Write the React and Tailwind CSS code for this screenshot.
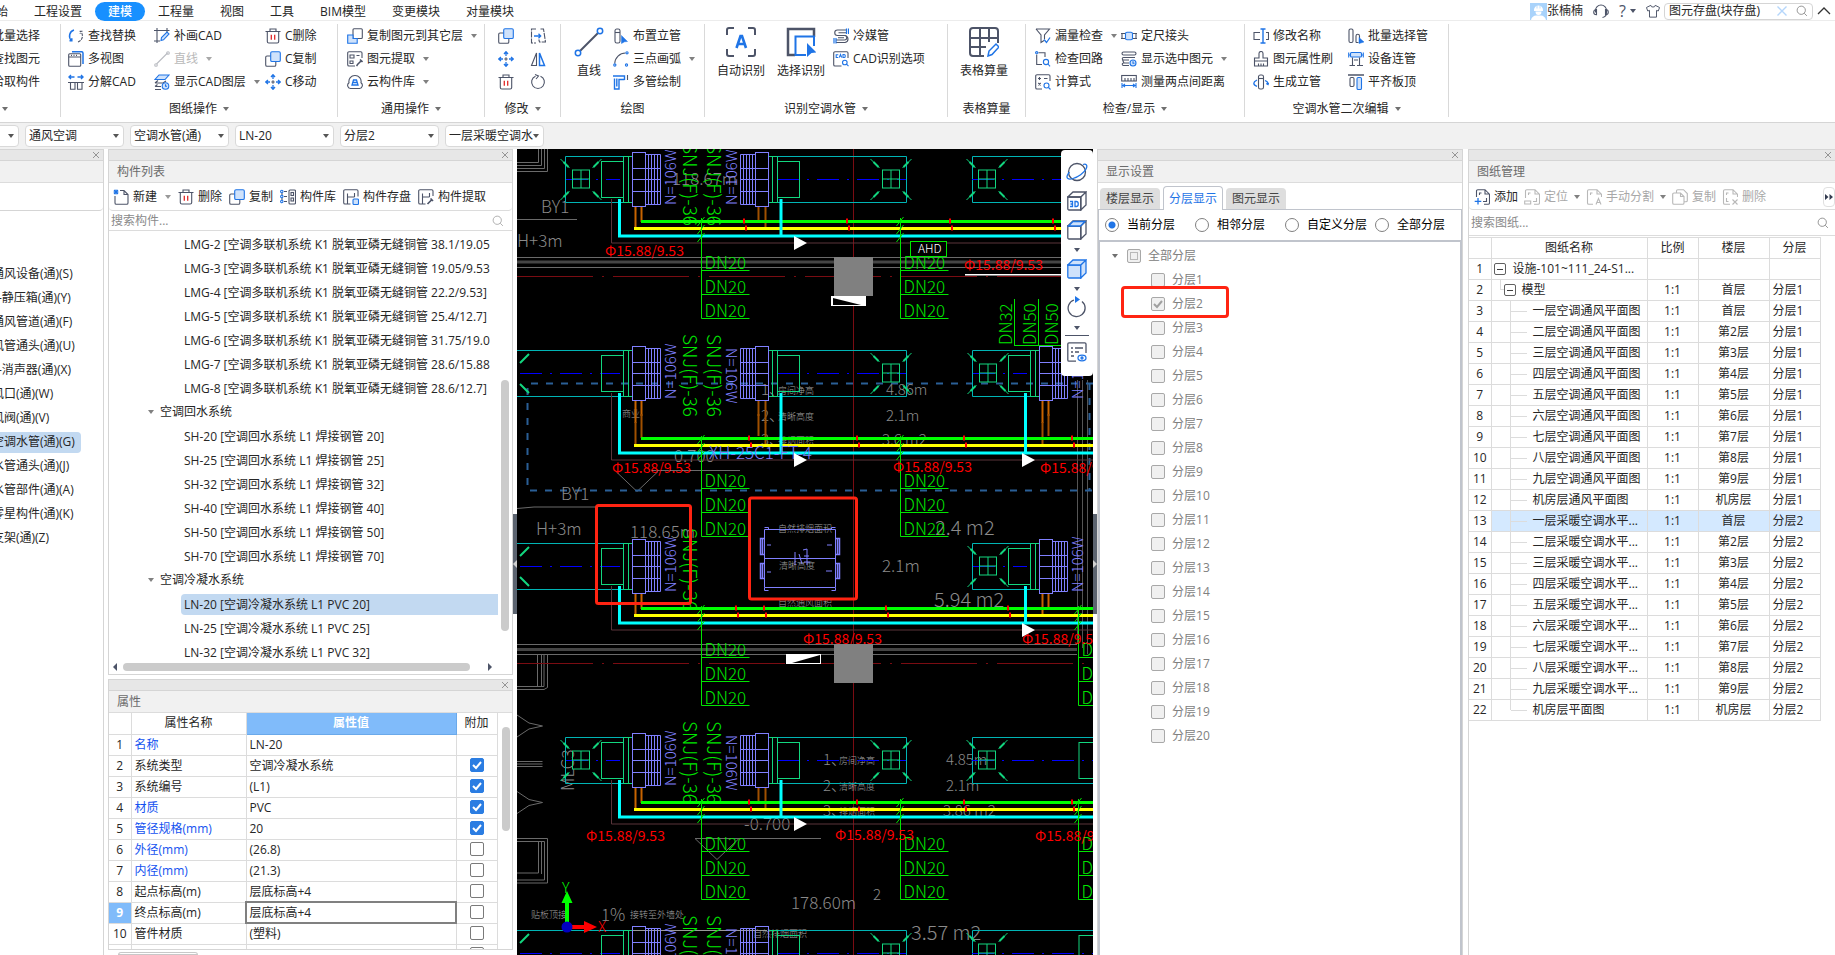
import { useState } from "react";

const BLUE = "#1f74e6";
const PALE = "#cfe2fb";

// All small icons share a 16x16 grid, dark strokes come from currentColor
const ICONS = {
  swap: (
    <>
      <path d="M6 2a6.3 6.3 0 0 0-2.6 10.5M1.5 12.8h2.3v-2.5" stroke={BLUE} strokeWidth="1.5" />
      <path d="M10 14a6.3 6.3 0 0 0 2.6-10.5M14.5 3.2h-2.3v2.5" strokeDasharray="3 1" />
    </>
  ),
  windows: (
    <>
      <path d="M4 .7h9.5a1.5 1.5 0 0 1 1.5 1.5V13" stroke={BLUE} strokeWidth="1.5" />
      <rect x=".7" y="2.7" width="12" height="12.5" rx="1" />
      <path d="M.7 6h12M3 4.4h1M5.5 4.4h1M8 4.4h1" />
    </>
  ),
  explode: (
    <>
      <path d="M1 3h5.5M3 1 1 3l2 2M9.500 3H15M13 1l2 2-2 2" stroke={BLUE} strokeWidth="1.4" />
      <path d="M0 8.500h16M2.500 8.500v6.800h4.500V8.500M9.500 8.500v6.800h4.500V8.500" />
    </>
  ),
  patch: (
    <>
      <path d="M0 2.500h15.500M3 0v15M0 13h6M13 0v4" />
      <path d="m7 12.500.5-3L13 4l2 2-5.500 5.800-2.500.7Z" stroke={BLUE} fill={PALE} />
    </>
  ),
  lineOff: (
    <g stroke="#b9bcc2">
      <path d="m2.5 13 11-11" />
      <circle cx="2" cy="14" r="1.3" />
      <circle cx="14" cy="2" r="1.3" />
    </g>
  ),
  layers: (
    <>
      <path d="m5 1h10l-4 4.500H1Z" fill={PALE} stroke={BLUE} />
      <path d="M1 9h8l3-2M4 6.500 1 9M1 12.500h6M3.500 10.500l-2.500 2M1 15.500h6" />
      <circle cx="11.5" cy="12" r="3.3" stroke={BLUE} fill={PALE} />
      <path d="M11.5 10.2v2h1.500" stroke={BLUE} />
    </>
  ),
  trash: (
    <>
      <path d="M.5 3.500h15M5 3V1h6v2M2.300 4v9.500A1.500 1.500 0 0 0 3.800 15h8.400a1.500 1.500 0 0 0 1.500-1.500V4" />
      <path d="M6.300 6.800v5M9.700 6.800v5" stroke="#e02828" strokeWidth="1.3" />
    </>
  ),
  copy: (
    <>
      <path d="M6 5H2a1.300 1.300 0 0 0-1.300 1.300V14A1.300 1.300 0 0 0 2 15.300h7.500a1.300 1.300 0 0 0 1.300-1.300v-3.500" />
      <rect x="5.7" y=".7" width="9.6" height="9.8" rx="1.3" fill={PALE} stroke={BLUE} />
    </>
  ),
  copyFloor: (
    <>
      <rect x="6" y=".7" width="9.3" height="9.8" rx="1" />
      <path d="M6 7H.7v8.300h9.500v-4.800H6Z" fill={PALE} stroke={BLUE} />
    </>
  ),
  move: (
    <>
      <path d="M8 5v-4M6 3l2-2.300L10 3M8 11v4M6 13l2 2.300 2-2.300M5 8H1M3 6 .7 8 3 10M11 8h4M13 6l2.300 2-2.300 2" stroke={BLUE} strokeWidth="1.3" />
      <path d="M8 6.300v3.400M6.300 8h3.400" />
    </>
  ),
  extract: (
    <>
      <path d="M15 7V2a1.300 1.300 0 0 0-1.300-1.300H2A1.300 1.300 0 0 0 .7 2v11.700A1.300 1.300 0 0 0 2 15h6" />
      <path d="M3 4h4v3H3ZM9.500 4.500h3M3 10h3v2.500H3Z" />
      <path d="m10 14 4-4M9.500 15l1-1M13 8.500l2.500 2.500" strokeWidth="1.6" />
    </>
  ),
  cloud: (
    <>
      <path d="M3.500 14.500A3.200 3.200 0 0 1 2 8.700 6 6 0 0 1 8 1.500a6 6 0 0 1 6 7.200 3.200 3.200 0 0 1-1.500 5.800Z" />
      <path d="M6.500 6h3l1.500 5h-6ZM5.500 8.500h5" stroke={BLUE} strokeWidth="1.3" />
    </>
  ),
  align: (
    <>
      <path d="M6 1H1.500v14H6M10.500 1h3l2 13h-6l-.7-2.500" strokeDasharray="6 1" />
      <path d="M4 8h6.500M8.500 5.800 10.700 8l-2.200 2.200" stroke={BLUE} strokeWidth="1.3" />
    </>
  ),
  mirror: (
    <>
      <path d="M6.500 2v12.500H1.500Z" />
      <path d="M9.500 2v12.500h5Z" stroke={BLUE} strokeWidth="1.5" />
    </>
  ),
  rotate: (
    <>
      <path d="M10.500 2.200A6.400 6.400 0 1 1 5.500 2.200" />
      <path d="M5 .5 8.500 2 6 5" />
    </>
  ),
  riser: (
    <>
      <rect x="2" y="1" width="5" height="14" rx="1.8" />
      <path d="M2 4.500h5" />
      <path d="m8.500 7.500 6 6-3 .3-3 1.700Z" fill={BLUE} stroke={BLUE} strokeWidth=".5" />
    </>
  ),
  arc: (
    <>
      <path d="M1.700 12.500A11 11 0 0 1 12.500 2" />
      <g stroke={BLUE}>
        <circle cx="1.8" cy="14" r="1.1" />
        <circle cx="14" cy="1.8" r="1.1" />
        <circle cx="13.5" cy="14" r="1.1" />
      </g>
    </>
  ),
  multipipe: (
    <>
      <path d="M0 2h11.500v4M1.500 4.500V15H6V5.500h5.500M3.800 12.500V4.500" stroke={BLUE} strokeWidth="1.4" />
      <path d="M14.500 1v5" />
    </>
  ),
  coil: (
    <>
      <path d="M13 2H4.500a2.700 2.700 0 0 0 0 5.500h7a2.200 2.200 0 0 1 0 4.500H3M13 4.800H5.500M5 9.800h6M3 14.500h9a3.500 3.500 0 0 0 3-3.500c0-2-1.500-3.500-3-3.500" />
      <path d="M13.500.5V6M15.500.5V6M1 10v5.500M3 10v5.500" stroke={BLUE} strokeWidth="1.2" />
    </>
  ),
  cadOption: (
    <>
      <path d="M15 7V2a1.300 1.300 0 0 0-1.300-1.300H2A1.300 1.300 0 0 0 .7 2v11.700A1.300 1.300 0 0 0 2 15h6.500" />
      <path d="M5.300 3.700H3.200v2.800h2.100M6.300 6.500l1.200-3 1.200 3M10 3.500v3h1.200a1 1 0 0 0 1-1V4.500a1 1 0 0 0-1-1Z" stroke={BLUE} />
      <circle cx="11.8" cy="11.5" r="2.3" stroke={BLUE} />
      <path d="m13.500 13.200 2 2" stroke={BLUE} />
    </>
  ),
  leak: (
    <>
      <path d="M1 1h13.500L9.500 7v4M1 1l5 6v7.500l3-2" />
      <path d="m9 11.500 2.500 3L15 9.500" stroke={BLUE} strokeWidth="1.3" />
    </>
  ),
  loop: (
    <>
      <path d="M3.500 1.700H10V6M1.700 3.500V13.500H7" />
      <g stroke={BLUE}>
        <circle cx="1.7" cy="1.7" r="1.1" />
        <circle cx="11" cy="11" r="2.6" />
        <path d="m13 13 2 2.300" />
      </g>
    </>
  ),
  formula: (
    <>
      <path d="M15 7V2a1.300 1.300 0 0 0-1.300-1.300H2A1.300 1.300 0 0 0 .7 2v11.700A1.300 1.300 0 0 0 2 15h5" />
      <path d="M3 4.500h3M4.500 3v3M9 4.500h3.500M3.300 9l2.400 2.400M5.700 9l-2.400 2.400" />
      <circle cx="11.5" cy="11.5" r="2.5" stroke={BLUE} />
      <path d="m13.500 13.500 2 2" stroke={BLUE} />
    </>
  ),
  joint: (
    <>
      <path d="M0 5.500h4.500M0 10.500h4.500M11.500 5.500H16M11.500 10.500H16M1 5.500v5M15 5.500v5" />
      <rect x="4.5" y="4.3" width="7" height="7.4" rx="1.5" fill={PALE} stroke={BLUE} />
    </>
  ),
  showSel: (
    <>
      <rect x="1" y="1" width="14" height="3" rx="1.5" />
      <path d="M14 6.500H2.500a1.200 1.200 0 0 0 0 2.500H8M8 12H2.500a1.200 1.200 0 0 0 0 2.500H8M1.500 9l1.500 3" />
      <circle cx="12" cy="12" r="3" stroke={BLUE} fill={PALE} />
      <path d="M12 10.300v2h1.500" stroke={BLUE} />
    </>
  ),
  measure: (
    <>
      <rect x=".7" y="1.5" width="14.6" height="5.5" />
      <path d="M4 4v3M7 4v3M10 4v3M13 4v3" />
      <path d="M1 9v5M15 9v5M2 11.500h12M4 10l-2 1.500L4 13M12 10l2 1.500-2 1.500" stroke={BLUE} />
    </>
  ),
  rename: (
    <>
      <path d="M7 4.500H1v7h6M13 4.500h2.500v7H13" />
      <path d="M10 1v14M7.500 1h5M7.500 15h5" stroke={BLUE} strokeWidth="1.4" />
    </>
  ),
  brush: <path d="M6 7V2.500a2 2 0 0 1 4 0V7h4.500v3h-13V7ZM1.500 10v5h13v-5M5.500 15v-2.500M8 15v-2.500M10.500 15v-2.500" />,
  genRiser: (
    <>
      <rect x="5.5" y="1" width="5" height="14" rx="1.8" />
      <path d="M5.500 4.500h5" />
      <path d="M4 6C2 7 .8 8 .8 9.300c0 1.400 1 2.300 3.200 3M12 6.500c1.800.6 3 1.500 3 3.500M15.700 8.800 15 10.500l-1.800-1" stroke={BLUE} strokeWidth="1.3" />
    </>
  ),
  batchPipe: (
    <>
      <rect x="1" y="1" width="4" height="13.5" rx="1.5" />
      <path d="M8 14.500V8a1.500 1.500 0 0 1 3.500 0v2M8 14.500h2.500" />
      <path d="m11 9.500 5 4.500-5 1.500Z" fill={BLUE} stroke={BLUE} strokeWidth=".5" />
    </>
  ),
  device: (
    <>
      <rect x="2.5" y="1.5" width="11" height="4.5" rx="1" stroke={BLUE} fill={PALE} />
      <path d="M.7 1.500v5M15.300 1.500v5M.7 4h2M13 4h2" stroke={BLUE} />
      <path d="M4.500 6.500v8M11.500 6.500v8M1.500 14.500h5.500M9 14.500h6M6 9h4" />
    </>
  ),
  alignTop: (
    <>
      <path d="M0 1h16" strokeWidth="1.5" />
      <rect x="2" y="3.5" width="4" height="9" rx="1.2" />
      <rect x="9" y="3.5" width="4.5" height="12" rx="1.2" fill={PALE} stroke={BLUE} />
    </>
  ),
  newItem: (
    <>
      <path d="M2 7v7a1.300 1.300 0 0 0 1.300 1.300h10.400A1.300 1.300 0 0 0 15 14V5.500L11 1.500H7M11 1.500v4h4" />
      <path d="M1 1l4 4M5 1 1 5M3 .5v5M.5 3h5" stroke={BLUE} />
    </>
  ),
  library: (
    <>
      <rect x="9" y="1" width="6.5" height="14" rx="1" />
      <rect x="11" y="3.5" width="2.5" height="3" />
      <rect x="11" y="9" width="2.5" height="3" />
      <path d="M4 2.500h3M4 7.500h3M4 12.500h3M2 3.700v2.600M2 8.700v2.600" />
      <g stroke={BLUE}>
        <circle cx="1.8" cy="2.5" r="1.2" />
        <circle cx="1.8" cy="7.5" r="1.2" />
        <circle cx="1.8" cy="12.5" r="1.2" />
      </g>
    </>
  ),
  save: (
    <>
      <path d="M15 7.500V2a1.300 1.300 0 0 0-1.300-1.300H2A1.300 1.300 0 0 0 .7 2v11.700A1.300 1.300 0 0 0 2 15h5.500M4.500 15V4.500M11.500 4v4M4.500 8h7" />
      <rect x="10" y="10" width="5.5" height="5.5" rx="1" fill={PALE} stroke={BLUE} />
    </>
  ),
  pull: (
    <>
      <path d="M15 7V2a1.300 1.300 0 0 0-1.300-1.300H2A1.300 1.300 0 0 0 .7 2v11.700A1.300 1.300 0 0 0 2 15h5.500M4.500 15V4.500M11.500 4v4M4.500 8h7" />
      <path d="m9.500 15 4-4M12.500 9.500l2.500 2.500" strokeWidth="1.7" />
    </>
  ),
  sheetAdd: (
    <>
      <path d="M2.500 8V2A1.300 1.300 0 0 1 3.800.7H11l4.500 4.500V14a1.300 1.300 0 0 1-1.300 1.300H10M11 1v4h4M5.500 6V4h2M12.500 9v3.500H9" />
      <path d="M4 9v6.500M.7 12.300h6.600" stroke={BLUE} strokeWidth="1.3" />
    </>
  ),
  sheetLocate: (
    <>
      <path d="M1.500 9V2A1.300 1.300 0 0 1 2.800.7H11l4.500 4.500V14a1.300 1.300 0 0 1-1.300 1.300H10M11 1v4h4M4.500 6V4h2M12.500 9v3.500H9" />
      <path d="M.7 12h6v3h-6Z" />
    </>
  ),
  sheetSplit: (
    <>
      <path d="M15.500 8V5.200L11 .7H2.800A1.300 1.300 0 0 0 1.500 2v12a1.300 1.300 0 0 0 1.300 1.300H7M11 1v4h4M4.500 6V4h2" />
      <path d="m10 15.500 2.500-6 2.500 6M11 13.500h3" />
    </>
  ),
  sheetCopy: (
    <>
      <path d="M4.500 4V2A1.300 1.300 0 0 1 5.800.7h5.700L15.300 4.500v7a1.300 1.300 0 0 1-1.300 1.300h-2" />
      <path d="M.7 5.300A1.300 1.300 0 0 1 2 4h6.500L12 7.500V14a1.300 1.300 0 0 1-1.300 1.300H2A1.300 1.300 0 0 1 .7 14ZM8.500 4v3.500H12" />
    </>
  ),
  sheetDelete: (
    <>
      <path d="M15.500 8V5.200L11 .7H2.800A1.300 1.300 0 0 0 1.500 2v12a1.300 1.300 0 0 0 1.300 1.300H8M11 1v4h4M4.500 6V4h2M4.500 9v3.500h2" />
      <path d="m10.500 10.500 5 5M15.500 10.500l-5 5" />
    </>
  ),
  search: (
    <>
      <circle cx="7" cy="7" r="5.5" />
      <path d="m11 11 3.500 3.500" />
    </>
  ),
  close: <path d="m2 2 12 12M14 2 2 14" strokeWidth="1.8" />,
  headset: (
    <>
      <path d="M2.500 9.500V7.500a5.500 5.500 0 0 1 11 0v2a5 5 0 0 1-4 5" />
      <path d="M3.500 6.500C1.500 6.500.7 8 .7 9.200s.8 2.500 2.800 2.500ZM12.500 6.500c2 0 2.800 1.500 2.800 2.700s-.8 2.500-2.800 2.500Z" />
    </>
  ),
  shirt: <path d="M5.500 1.500a2.500 2 0 0 0 5 0L15.500 4 14 8l-2-.7V15H4V7.300L2 8 .5 4Z" />,
};

function Icon({ name, className = "size-4" }) {
  return (
    <svg viewBox="0 0 16 16" fill="none" stroke="currentColor" strokeWidth="1.1" className={`shrink-0 ${className}`} aria-hidden="true">
      {ICONS[name]}
    </svg>
  );
}

function Caret({ className = "text-[#707070]" }) {
  return (
    <svg viewBox="0 0 6 4" className={`h-1 w-1.5 shrink-0 ${className}`} aria-hidden="true">
      <path d="M0 0h6L3 4Z" fill="currentColor" />
    </svg>
  );
}

/* ---------- Menu bar ---------- */

const MENUS = ["开始", "工程设置", "建模", "工程量", "视图", "工具", "BIM模型", "变更模块", "对量模块"];

function MenuBar() {
  const [query, setQuery] = useState("图元存盘(块存盘)");
  return (
    <header className="flex h-[21px] shrink-0 justify-between border-b border-[#ececec] bg-white pt-0.5">
      <nav className="-ml-[29px] flex">
        {MENUS.map((m) => (
          <button
            key={m}
            className={
              m === "建模"
                ? "h-[19px] rounded-full bg-[#1890ff] px-[13px] font-medium text-white"
                : "h-[19px] px-[13px]"
            }
          >
            {m}
          </button>
        ))}
      </nav>
      <div className="flex items-center gap-1 pr-1">
        <button className="mr-1.5 flex items-center">
          <svg viewBox="0 0 17 17" className="size-[17px]" aria-hidden="true">
            <rect width="17" height="17" fill="#a9d3fb" />
            <path d="M4 7a4.500 4.500 0 0 1 9 0v1H4ZM5.500 8.500h6a3 3.500 0 0 1-6 0ZM1 17c.5-3 3-4.500 5-4.500h5c2 0 4.500 1.500 5 4.500Z" fill="#fff" />
            <path d="M7 2.500v3M10 2.500v3" stroke="#a9d3fb" strokeWidth=".8" />
          </svg>
          张楠楠
        </button>
        <button aria-label="客服" className="mr-1.5 text-[#4d5468]"><Icon name="headset" /></button>
        <button aria-label="帮助" className="mr-1.5 flex items-center gap-1 text-base leading-4 text-[#4d5468]">
          ?<Caret className="text-[#4d5468]" />
        </button>
        <button aria-label="皮肤" className="text-[#4d5468]"><Icon name="shirt" className="size-3.5" /></button>
        <div className="flex h-[17px] w-[149px] items-center gap-2 rounded-sm border border-[#d5d5d5] px-1">
          <input
            aria-label="搜索功能"
            value={query}
            onChange={(e) => setQuery(e.target.value)}
            className="min-w-0 flex-1 leading-4 outline-none"
          />
          <button aria-label="清空" className="text-[#b5d6fb]"><Icon name="close" className="size-3" /></button>
          <button aria-label="搜索" className="text-[#808080]"><Icon name="search" className="size-3" /></button>
        </div>
        <button aria-label="收起" className="text-[#333]">
          <svg viewBox="0 0 14 8" className="h-2 w-3.5" fill="none" stroke="currentColor" strokeWidth="1.3">
            <path d="m1 7 6-6 6 6" />
          </svg>
        </button>
      </div>
    </header>
  );
}

/* ---------- Ribbon ---------- */

function Tool({ icon, label, caret, off }) {
  return (
    <button className={`flex h-[23px] items-center gap-1 whitespace-nowrap ${off ? "text-[#b9b9b9]" : ""}`}>
      <span className="text-[#4d5468]"><Icon name={icon} /></span>
      {label}
      {caret && <span className="pl-1"><Caret className={off ? "text-[#a8a8a8]" : "text-[#808080]"} /></span>}
    </button>
  );
}

function BigTool({ label, children }) {
  return (
    <button className="flex w-12 flex-col items-center gap-1.5 pt-[3px] whitespace-nowrap">
      <svg viewBox="0 0 30 30" className="size-[30px] text-[#4d5468]" fill="none" stroke="currentColor" strokeWidth="2" aria-hidden="true">
        {children}
      </svg>
      {label}
    </button>
  );
}

function Group({ label, caret, width, children }) {
  return (
    <section className={`flex h-[93px] flex-col justify-between border-r border-[#d9d9d9] ${width}`}>
      <div className="flex">{children}</div>
      <div className="flex h-4 items-center justify-center gap-1.5">
        {label}
        {caret && <Caret className="text-[#707070]" />}
      </div>
    </section>
  );
}

function Ribbon() {
  return (
    <div className="flex h-[101px] shrink-0 overflow-hidden bg-white pt-[3px]">
      <section className="flex h-[93px] w-[61px] shrink-0 flex-col justify-between border-r border-[#d9d9d9]">
        <div className="-ml-2 flex flex-col items-start">
          <button className="h-[23px] whitespace-nowrap">批量选择</button>
          <button className="h-[23px] whitespace-nowrap">查找图元</button>
          <button className="h-[23px] whitespace-nowrap">拾取构件</button>
        </div>
        <div className="flex h-4 items-center pl-0.5"><Caret /></div>
      </section>
      <Group label="图纸操作" caret width="w-[277px] shrink-0">
        <div className="w-[86px] pl-[7px]">
          <Tool icon="swap" label="查找替换" />
          <Tool icon="windows" label="多视图" />
          <Tool icon="explode" label="分解CAD" />
        </div>
        <div className="w-[113px] pl-[7px]">
          <Tool icon="patch" label="补画CAD" />
          <Tool icon="lineOff" label="直线" caret off />
          <Tool icon="layers" label="显示CAD图层" caret />
        </div>
        <div className="pl-[5px]">
          <Tool icon="trash" label="C删除" />
          <Tool icon="copy" label="C复制" />
          <Tool icon="move" label="C移动" />
        </div>
      </Group>
      <Group label="通用操作" caret width="w-[147px] shrink-0">
        <div className="pl-[9px]">
          <Tool icon="copyFloor" label="复制图元到其它层" caret />
          <Tool icon="extract" label="图元提取" caret />
          <Tool icon="cloud" label="云构件库" caret />
        </div>
      </Group>
      <Group label="修改" caret width="w-[76px] shrink-0">
        <div className="grid grid-cols-2 gap-x-4 pl-[13px] text-[#4d5468]">
          {["copy", "align", "move", "mirror", "trash", "rotate"].map((n) => (
            <button key={n} aria-label={n} className="flex h-[23px] items-center"><Icon name={n} /></button>
          ))}
        </div>
      </Group>
      <Group label="绘图" width="w-[144px] shrink-0">
        <div className="pl-1">
          <BigTool label="直线">
            <path d="M5 25 25 5" />
            <g stroke={BLUE} fill="#fff" strokeWidth="1.5">
              <circle cx="4" cy="26" r="2.7" />
              <circle cx="26" cy="4" r="2.7" />
            </g>
          </BigTool>
        </div>
        <div>
          <Tool icon="riser" label="布置立管" />
          <Tool icon="arc" label="三点画弧" caret />
          <Tool icon="multipipe" label="多管绘制" />
        </div>
      </Group>
      <Group label="识别空调水管" caret width="w-[243px] shrink-0">
        <div className="flex gap-3 pr-2 pl-3">
          <BigTool label="自动识别">
            <path d="M1 8V3a2 2 0 0 1 2-2h5M22 1h5a2 2 0 0 1 2 2v5M29 22v5a2 2 0 0 1-2 2h-5M8 29H3a2 2 0 0 1-2-2v-5" />
            <path d="m10.500 21 4-12h1.500l4 12M12 17h6.500" stroke={BLUE} strokeWidth="2.6" />
          </BigTool>
          <BigTool label="选择识别">
            <path d="M9 28H2V2h26v8" strokeWidth="2.5" />
            <path d="M20 28H9.500V9.500H28V19" stroke={BLUE} />
            <path d="m21 16 9.500 9.500-5 .5-4.500 4Z" fill={BLUE} stroke="none" />
          </BigTool>
        </div>
        <div>
          <Tool icon="coil" label="冷媒管" />
          <Tool icon="cadOption" label="CAD识别选项" />
        </div>
      </Group>
      <Group label="表格算量" width="w-[78px] shrink-0">
        <div className="pl-3">
          <BigTool label="表格算量">
            <path d="M15 29H4a3 3 0 0 1-3-3V4a3 3 0 0 1 3-3h22a3 3 0 0 1 3 3v12M1 11h28M1 20h16M11 1v28M20 1v14" />
            <path d="m19 29 1-5 7-7 3 3-7 7.500Z" stroke={BLUE} strokeWidth="1.5" />
          </BigTool>
        </div>
      </Group>
      <Group label="检查/显示" caret width="w-[219px] shrink-0">
        <div className="w-[95px] pl-[9px]">
          <Tool icon="leak" label="漏量检查" caret />
          <Tool icon="loop" label="检查回路" />
          <Tool icon="formula" label="计算式" />
        </div>
        <div>
          <Tool icon="joint" label="定尺接头" />
          <Tool icon="showSel" label="显示选中图元" caret />
          <Tool icon="measure" label="测量两点间距离" />
        </div>
      </Group>
      <Group label="空调水管二次编辑" caret width="w-[204px] shrink-0">
        <div className="w-[103px] pl-2">
          <Tool icon="rename" label="修改名称" />
          <Tool icon="brush" label="图元属性刷" />
          <Tool icon="genRiser" label="生成立管" />
        </div>
        <div>
          <Tool icon="batchPipe" label="批量选择管" />
          <Tool icon="device" label="设备连管" />
          <Tool icon="alignTop" label="平齐板顶" />
        </div>
      </Group>
    </div>
  );
}

const COMBOS = [
  ["楼层", "首层"],
  ["专业", "通风空调"],
  ["构件类型", "空调水管(通)"],
  ["构件", "LN-20"],
  ["分层", "分层2"],
  ["图纸", "一层采暖空调水"],
];

function ComboBar() {
  return (
    <div className="h-[27px] shrink-0 overflow-hidden border-t border-[#d5d5d5] bg-[#f1f1f1]">
      <div className="-ml-20 flex gap-1.5 pt-0.5">
        {COMBOS.map(([name, value]) => (
          <div key={name} className="relative w-[99px]">
            <select
              aria-label={name}
              className="h-[22px] w-full appearance-none rounded border border-[#d9d9d9] bg-white pr-2 pl-[3px] leading-5"
            >
              <option>{value}</option>
            </select>
            <span className="pointer-events-none absolute inset-y-0 right-[5px] flex items-center">
              <Caret className="text-[#555]" />
            </span>
          </div>
        ))}
      </div>
    </div>
  );
}

/* ---------- Shared panel parts ---------- */

function PanelHead({ title }) {
  return (
    <>
      <div className="flex h-3 shrink-0 items-center justify-end border-t border-b border-[#d5d5d5] bg-[#e7e7e7] pr-[3px] text-[#8a8a8a]">
        <button aria-label="关闭面板"><Icon name="close" className="size-2" /></button>
      </div>
      <h2 className="h-[22px] shrink-0 border-b border-[#dcdcdc] bg-[#f1f1f1] pl-2 leading-[21px] text-[#6b6b6b]">{title}</h2>
    </>
  );
}

const NAV = [
  "通风设备(通)(S)",
  "-静压箱(通)(Y)",
  "通风管道(通)(F)",
  "风管通头(通)(U)",
  "-消声器(通)(X)",
  "风口(通)(W)",
  "风阀(通)(V)",
  "空调水管(通)(G)",
  "水管通头(通)(J)",
  "水管部件(通)(A)",
  "零星构件(通)(K)",
  "支架(通)(Z)",
];

function NavPanel() {
  return (
    <aside className="flex w-[104px] shrink-0 flex-col overflow-hidden border-r border-[#d5d5d5] bg-white">
      <PanelHead title="" />
      <div className="h-7 shrink-0 rounded-r border-b border-[#d5d5d5]" />
      <ul className="pt-[51px]">
        {NAV.map((n) => (
          <li key={n} className="flex h-6 items-center">
            <button
              className={`-ml-2 h-[21px] rounded pr-1.5 whitespace-nowrap ${n[0] === "-" ? "pl-1.5" : ""} ${
                n.endsWith("(G)") ? "bg-[#c2d9f1]" : ""
              }`}
            >
              {n}
            </button>
          </li>
        ))}
      </ul>
    </aside>
  );
}

/* ---------- Component list ---------- */

const COMPONENTS = [
  "LMG-2 [空调多联机系统 K1 脱氧亚磷无缝铜管 38.1/19.05",
  "LMG-3 [空调多联机系统 K1 脱氧亚磷无缝铜管 19.05/9.53",
  "LMG-4 [空调多联机系统 K1 脱氧亚磷无缝铜管 22.2/9.53]",
  "LMG-5 [空调多联机系统 K1 脱氧亚磷无缝铜管 25.4/12.7]",
  "LMG-6 [空调多联机系统 K1 脱氧亚磷无缝铜管 31.75/19.0",
  "LMG-7 [空调多联机系统 K1 脱氧亚磷无缝铜管 28.6/15.88",
  "LMG-8 [空调多联机系统 K1 脱氧亚磷无缝铜管 28.6/12.7]",
  "#空调回水系统",
  "SH-20 [空调回水系统 L1 焊接钢管 20]",
  "SH-25 [空调回水系统 L1 焊接钢管 25]",
  "SH-32 [空调回水系统 L1 焊接钢管 32]",
  "SH-40 [空调回水系统 L1 焊接钢管 40]",
  "SH-50 [空调回水系统 L1 焊接钢管 50]",
  "SH-70 [空调回水系统 L1 焊接钢管 70]",
  "#空调冷凝水系统",
  "LN-20 [空调冷凝水系统 L1 PVC 20]",
  "LN-25 [空调冷凝水系统 L1 PVC 25]",
  "LN-32 [空调冷凝水系统 L1 PVC 32]",
];

const LIST_TOOLS = [
  ["newItem", "新建", true],
  ["trash", "删除"],
  ["copy", "复制"],
  ["library", "构件库"],
  ["save", "构件存盘"],
  ["pull", "构件提取"],
];

function ComponentPanel() {
  return (
    <section className="flex h-[526px] shrink-0 flex-col border-x border-b border-[#d5d5d5] bg-white">
      <PanelHead title="构件列表" />
      <div className="flex h-7 shrink-0 items-center gap-[7px] rounded border-b border-[#dcdcdc] pt-px pl-1">
        {LIST_TOOLS.map(([icon, label, caret]) => (
          <button key={label} className="flex items-center gap-1 whitespace-nowrap">
            <span className="text-[#4d5468]"><Icon name={icon} /></span>
            {label}
            {caret && <span className="pl-1"><Caret className="text-[#999]" /></span>}
          </button>
        ))}
      </div>
      <div className="flex h-5 shrink-0 items-center border-b border-[#dcdcdc] pr-2">
        <input aria-label="搜索构件" placeholder="搜索构件..." className="min-w-0 flex-1 pl-0.5 outline-none placeholder:text-[#8a8a8a]" />
        <Icon name="search" className="size-3 text-[#a0a0a0]" />
      </div>
      <div className="flex min-h-0 flex-1 overflow-hidden">
        <ul className="min-w-0 flex-1 pt-px">
          {COMPONENTS.map((c) =>
            c[0] === "#" ? (
              <li key={c} className="flex h-6 items-center gap-1.5 pl-[39px]">
                <Caret className="text-[#808080]" />
                {c.slice(1)}
              </li>
            ) : (
              <li key={c} className="flex h-6 items-center pl-[72px]">
                <span
                  className={`h-[21px] min-w-0 flex-1 overflow-hidden rounded-l pl-[3px] leading-[21px] whitespace-nowrap ${
                    c.startsWith("LN-20") ? "bg-[#c2d9f1]" : ""
                  }`}
                >
                  {c}
                </span>
              </li>
            )
          )}
        </ul>
        <div className="w-3.5 shrink-0 px-[3px] pt-[149px]">
          <div className="h-[251px] w-2 rounded-full bg-[#cbcbcb]" />
        </div>
      </div>
      <div className="flex h-[15px] shrink-0 items-center gap-1.5 pr-5 pl-1 text-[#4d5468]">
        <svg viewBox="0 0 4 8" className="h-2 w-1" aria-hidden="true"><path d="M4 0v8L0 4Z" fill="currentColor" /></svg>
        <div className="mr-3 h-2 flex-1 rounded-full bg-[#cbcbcb]" />
        <svg viewBox="0 0 4 8" className="h-2 w-1" aria-hidden="true"><path d="M0 0v8l4-4Z" fill="currentColor" /></svg>
      </div>
    </section>
  );
}

/* ---------- Properties ---------- */

// name, value, highlighted name, attached (null = no tick box)
const PROPS = [
  ["名称", "LN-20", true, null],
  ["系统类型", "空调冷凝水系统", false, true],
  ["系统编号", "(L1)", false, true],
  ["材质", "PVC", true, true],
  ["管径规格(mm)", "20", true, true],
  ["外径(mm)", "(26.8)", true, false],
  ["内径(mm)", "(21.3)", true, false],
  ["起点标高(m)", "层底标高+4", false, false],
  ["终点标高(m)", "层底标高+4", false, false],
  ["管件材质", "(塑料)", false, false],
  ["", "", false, false],
];

function Tick({ label, checked }) {
  return (
    <span className="relative inline-flex">
      <input
        type="checkbox"
        aria-label={label}
        defaultChecked={checked}
        className="peer size-3.5 appearance-none rounded-xs border border-[#7a7a7a] bg-white checked:border-[#2b7de2] checked:bg-[#2b7de2]"
      />
      <svg viewBox="0 0 14 14" className="pointer-events-none absolute inset-0 hidden size-3.5 peer-checked:block" fill="none" stroke="#fff" strokeWidth="2">
        <path d="m3 7 3 3 5-6" />
      </svg>
    </span>
  );
}

function PropertyPanel() {
  return (
    <section className="mt-1 flex min-h-0 flex-1 flex-col">
      <div className="flex h-[271px] shrink-0 flex-col border-x border-b border-[#d5d5d5] bg-white">
        <PanelHead title="属性" />
        <div className="flex min-h-0 flex-1 overflow-hidden">
          <table className="w-[388px] table-fixed border-collapse self-start">
            <colgroup>
              <col className="w-[22px]" />
              <col className="w-[115px]" />
              <col className="w-[210px]" />
              <col className="w-[41px]" />
            </colgroup>
            <thead>
              <tr className="h-[21px]">
                <th className="border-r border-b border-[#dcdcdc]" />
                <th className="border-r border-b border-[#dcdcdc] font-normal">属性名称</th>
                <th className="border-r border-b border-[#6aa9ea] bg-[#80bbfa] font-bold text-white">属性值</th>
                <th className="border-r border-b border-[#dcdcdc] font-normal">附加</th>
              </tr>
            </thead>
            <tbody>
              {PROPS.map(([name, value, hot, on], i) => (
                <tr key={i} className="h-[21px]">
                  <td className={`border-r border-b border-[#dcdcdc] text-center ${i === 8 ? "bg-[#80bbfa] font-bold text-white" : ""}`}>
                    {i < 10 ? i + 1 : ""}
                  </td>
                  <td className={`border-r border-b border-[#dcdcdc] pl-[3px] ${hot ? "text-[#1452f0]" : ""}`}>{name}</td>
                  <td
                    className={`border-r border-b border-[#dcdcdc] pl-[3px] ${
                      i === 8 ? "outline-2 -outline-offset-1 outline-[#808080]" : ""
                    }`}
                  >
                    {value}
                  </td>
                  <td className="border-r border-b border-[#dcdcdc] text-center leading-none">
                    {on !== null && <Tick label={`附加 ${name}`} checked={on} />}
                  </td>
                </tr>
              ))}
            </tbody>
          </table>
          <div className="w-[15px] shrink-0 px-1 pt-3.5">
            <div className="h-[104px] w-2 rounded-full bg-[#cbcbcb]" />
          </div>
        </div>
      </div>
      <div className="mt-0.5 ml-2.5 h-3 w-20 rounded-t border border-[#c8c8c8] bg-white" />
    </section>
  );
}

/* ---------- Drawing canvas ---------- */

const GREEN = "#00e600";
const TEAL = "#12d67f";
const PURPLE = "#8080ff";
const GREY = "#8a8a8a";

function Diffuser({ x }) {
  return (
    <g stroke={TEAL}>
      <rect x={x} y="170" width="17" height="18" />
      <path d={`M${x + 8.5} 170v18M${x} 179h17`} />
      <path d={`M${x - 12} 159l9 9M${x + 29} 159l-9 9M${x - 12} 200l9-9M${x + 29} 200l-9-9`} />
      <path d={`M${x - 9} 162l5 5M${x + 26} 162l-5 5M${x - 9} 197l5-5M${x + 26} 197l-5-5`} strokeWidth="2" />
    </g>
  );
}

// Fan coil looking right, its duct starts at x = 565
function FanLeft({ open }) {
  return (
    <g>
      <path d={open ? "M480 156.500h144M480 202.500h144" : "M624 156.500h-58.500v46H624"} stroke="#00b4b4" />
      <path d={open ? "M480 179.500h140" : "M566 179.500h54"} stroke="#0000ff" strokeDasharray="22 8 2 8" />
      {!open && <Diffuser x={572.5} />}
      <rect x="601.5" y="161.5" width="22" height="36" stroke={TEAL} />
      <path d="M623.500 156.500h9v46h-9ZM628.500 156.500v46" stroke={TEAL} />
      <rect x="632.5" y="152.5" width="13" height="54" stroke={PURPLE} />
      <path d="M645.500 154.500h15v50h-15M648.500 154v50M651.500 154v50M654.500 154v50M657.500 154v50M633 168.500h27M633 179.500h27M633 191.500h27" stroke={PURPLE} />
      <text transform="translate(676 205) rotate(-90)" fill={PURPLE} fontSize="15">N=106W</text>
      <path d="M635.500 207v22M641.500 207v15" stroke="#c86400" strokeWidth="2" />
    </g>
  );
}

function FanRight({ flip }) {
  return (
    <g>
      <path d="M777 156.500h129.500v46H777" stroke="#00b4b4" />
      <path d="M777 179.500h129" stroke="#0000ff" strokeDasharray="22 8 2 8" />
      <Diffuser x={882.5} />
      <rect x="777.5" y="161.5" width="22" height="36" stroke={TEAL} />
      <path d="M768.500 156.500h9v46h-9ZM772.500 156.500v46" stroke={TEAL} />
      <rect x="755.5" y="152.5" width="13" height="54" stroke={PURPLE} />
      <path d="M755.500 154.500h-15v50h15M743.500 154v50M746.500 154v50M749.500 154v50M752.500 154v50M740 168.500h28M740 179.500h28M740 191.500h28" stroke={PURPLE} />
      {flip ? (
        <text transform="translate(726 154) rotate(90)" fill={PURPLE} fontSize="15">N=106W</text>
      ) : (
        <text transform="translate(737 205) rotate(-90)" fill={PURPLE} fontSize="15">N=106W</text>
      )}
      <path d="M758.500 207v15M765.500 207v22" stroke="#a05000" strokeWidth="2" />
    </g>
  );
}

function DuctRight({ box }) {
  return (
    <g>
      <path d="M1100 156.500H972.500v46H1100" stroke="#00b4b4" />
      <path d="M972 179.500h128" stroke="#0000ff" strokeDasharray="22 8 2 8" />
      <Diffuser x={978.5} />
      {box && <rect x="1079" y="161.5" width="22" height="36" stroke={TEAL} />}
    </g>
  );
}

function Models({ y, one }) {
  return (
    <g fill={GREEN} fontSize="19">
      <text transform={`translate(683 ${y}) rotate(90)`}>SNJ(F)-36</text>
      {!one && <text transform={`translate(707 ${y}) rotate(90)`}>SNJ(F)-36</text>}
    </g>
  );
}

// Three supply lines; y is the green one, drops lists the cyan risers
function Pipes({ y, top, drops, ticks }) {
  return (
    <g>
      <path d={`M611.500 ${top}V${y + 21.5}H1100`} stroke="#5a343a" />
      <path d={`M641 ${y}H1100`} stroke="#00ff00" strokeWidth="3" />
      <path d={`M634 ${y + 7}H1100`} stroke="#ffff00" strokeWidth="3" />
      <path d={`M619.500 ${top}V${y + 14.5}H1100`} stroke="#00ffff" strokeWidth="3" />
      {drops.map((x) => (
        <path key={x} d={`M${x} ${top}V${y + 15}`} stroke="#00ffff" strokeWidth="3" />
      ))}
      {ticks.map((x) => (
        <path key={x} d={`M${x} ${y - 3}v5M${x + 2} ${y + 4}v5`} stroke="#f00" strokeWidth="2" />
      ))}
    </g>
  );
}

function Stack({ x, y, rows, top }) {
  return (
    <g>
      <path d={`M${x} ${top}V${y + 24 * (rows - 1)}`} stroke={GREEN} />
      <path d={`M${x - 4} ${top + 8}l7-9M${x - 4} ${top + 16}l7-9M${x - 4} ${top + 24}l7-9`} stroke={GREEN} />
      {Array.from({ length: rows }, (_, i) => (
        <g key={i}>
          <path d={`M${x} ${y + 24 * i}h48`} stroke={GREEN} />
          <text x={x + 3} y={y - 2 + 24 * i} fill={GREEN} fontSize="17">DN20</text>
        </g>
      ))}
    </g>
  );
}

const SIZES = [
  [605, 256], [964, 270], [612, 473], [893, 472], [1040, 473],
  [803, 644], [1022, 644], [586, 841], [835, 840], [1035, 841],
];

const NOTES = [
  [541, 213, "BY1"], [517, 247, "H+3m"], [672, 185, "118.67m"], [561, 500, "BY1"], [536, 535, "H+3m"],
  [630, 538, "118.65m"], [882, 572, "2.1m"], [674, 462, "0.700"], [744, 830, "-0.700"], [791, 909, "178.60m"],
  [601, 921, "1%"],
];

const AREAS = [[935, 535, "2.4 m2"], [934, 607, "5.94 m2"], [911, 940, "3.57 m2"]];

const SMALL_NOTES = [
  [761, 395, "1、"], [886, 395, "4.86m"], [761, 421, "2、"], [886, 421, "2.1m"], [761, 445, "3、"], [882, 445, "3.6 m2"],
  [823, 765, "1、"], [946, 765, "4.85m"], [823, 791, "2、"], [946, 791, "2.1m"], [823, 816, "3、"], [943, 816, "3.86 m2"],
  [873, 900, "2"],
];

const CN_NOTES = [
  [778, 394, "房间净高"], [778, 420, "清晰高度"], [778, 444, "排烟面积"], [778, 532, "自然排烟面积"], [779, 569, "清晰高度"],
  [778, 606, "自然通风面积"], [839, 764, "房间净高"], [839, 790, "清晰高度"], [839, 815, "排烟面积"],
  [531, 918, "贴板顶接"], [630, 918, "接转至外墙处"], [753, 937, "自然排烟面积"], [622, 417, "商业"],
];

function Drawing() {
  return (
    <svg
      viewBox="517 149 576 806"
      preserveAspectRatio="xMinYMin slice"
      className="h-full w-full bg-black font-['Noto_Sans_CJK_SC',sans-serif] font-light"
      fill="none"
      role="img"
      aria-label="空调水管平面图"
    >
      {/* walls and grid axes */}
      <g stroke="#6a6a6a">
        <path d="M517 171.500h30.500V149M517 168.500h27.500V149M517 165.500h24.500V149M517 162.500h21.500V149" />
        <path d="M517 219.500h60M517 257.500h576M517 267.500h576M517 644.500h560M517 654.500h560" />
        <path d="M517 262h576M517 649.500h560" stroke="#444" strokeWidth="3" />
        <path d="M517 508.500l17-1.500h62M517 689.500h27l3.500-2V654M517 686.500h27V654M541.500 654v32M537.500 654v32" />
        <path d="M517 715l12 8 13.500 3-13.500 3-12 8M517 791.500l12 8 13.500 3-13.500 3-12 8M517 761.500h25.500M517 764h25.500M517 766.500h25.500" />
        <path d="M517 838.500h30.500V883H517M517 841.500h27.500v38.500H517M541.500 841v33M538.500 841v32H517" />
        <path d="M1077.500 380v264M1082.500 380v268M1087.500 380v274" stroke="#555" />
        <path d="M616 471.500l21 20 21-20M651 470.500h89M695 838.500l22 21 22-21M695 838.500h126" />
        <path d="M517 930.500h250" stroke="#999" />
      </g>
      <path d="M517 276.500h576M517 663.500h576" stroke="#7a0c12" strokeDasharray="76 9 2 9" />
      <path d="M853.500 149v806" stroke="#7a0c12" />
      <path d="M1093 383.500H527.500v107H1093M1089.500 383v107" stroke="#2a5f96" strokeWidth="2" strokeDasharray="7 8" />

      {/* notes */}
      <g fill={GREY} fontSize="17">
        {NOTES.map(([x, y, t]) => <text key={`${x}-${y}`} x={x} y={y}>{t}</text>)}
        <text transform="translate(574 791) rotate(-90)">MLC3</text>
      </g>
      <g fill={GREY} fontSize="20">
        {AREAS.map(([x, y, t]) => <text key={`${x}-${y}`} x={x} y={y}>{t}</text>)}
      </g>
      <g fill={GREY} fontSize="15">
        {SMALL_NOTES.map(([x, y, t]) => <text key={`${x}-${y}`} x={x} y={y}>{t}</text>)}
      </g>
      <g fill="#a0a0a0" fontSize="9">
        {CN_NOTES.map(([x, y, t]) => <text key={`${x}-${y}`} x={x} y={y}>{t}</text>)}
      </g>

      {/* fan coils, one group per row */}
      <FanLeft />
      <FanRight />
      <DuctRight />
      <g transform="translate(0 194)">
        <FanLeft open />
        <FanRight flip />
        <g transform="translate(407 0)"><FanLeft /></g>
        <path d="M529 160l-9 9M520 190l9 9" stroke={TEAL} strokeWidth="2" />
        <path d="M635.500 228v24M641.500 220v24M758.500 220v22M765.500 228v22M1042.500 228v24M1048.500 220v22" stroke="#a05000" strokeWidth="2" />
      </g>
      <g transform="translate(0 387)">
        <FanLeft open />
        <g transform="translate(407 0)"><FanLeft /></g>
        <path d="M529 160l-9 9M520 190l9 9" stroke={TEAL} strokeWidth="2" />
      </g>
      <g transform="translate(0 581)">
        <FanLeft />
        <FanRight flip />
        <DuctRight box />
      </g>
      <g transform="translate(0 774)">
        <FanLeft open />
        <FanRight flip />
        <DuctRight box />
        <path d="M529 160l-9 9" stroke={TEAL} strokeWidth="2" />
      </g>

      <Models y={143} />
      <Models y={334} />
      <Models y={528} one />
      <Models y={721} />
      <Models y={915} />

      <Pipes y={221.5} top={199} drops={[781]} ticks={[744, 847, 950, 1053]} />
      <Pipes y={438.5} top={393} drops={[781, 1025.5]} ticks={[749, 857, 964, 1072]} />
      <Pipes y={608.5} top={586} drops={[1025.5]} ticks={[736, 764, 886, 1008]} />
      <Pipes y={802.5} top={780} drops={[781]} ticks={[749, 857, 964, 1072]} />

      <Stack x={701.5} y={270.5} rows={3} top={218} />
      <Stack x={900.5} y={270.5} rows={3} top={218} />
      <Stack x={701.5} y={488.5} rows={3} top={436} />
      <Stack x={900.5} y={488.5} rows={3} top={436} />
      <Stack x={701.5} y={657.5} rows={3} top={606} />
      <Stack x={1078.5} y={657.5} rows={3} top={606} />
      <Stack x={701.5} y={851.5} rows={3} top={799} />
      <Stack x={900.5} y={851.5} rows={3} top={799} />
      <Stack x={1078.5} y={851.5} rows={3} top={799} />

      <g fill={GREEN} fontSize="17">
        <text transform="translate(1012 345) rotate(-90)">DN32</text>
        <text transform="translate(1036 345) rotate(-90)">DN50</text>
        <text transform="translate(1058 345) rotate(-90)">DN50</text>
        <path d="M1014.500 299v46M1038.500 299v46M1014 345.500h50" stroke={GREEN} />
      </g>

      <g fill="#f00" fontSize="14" className="font-normal">
        {SIZES.map(([x, y]) => <text key={`${x}-${y}`} x={x} y={y}>Φ15.88/9.53</text>)}
      </g>
      <text x="709" y="459" fill={PURPLE} fontSize="17">XH-25C1-FT-4</text>

      <g fill="#fff">
        <path d="M794 236l13 7-13 7ZM794 453l13 7-13 7ZM1022 453l13 7-13 7ZM1022 623l13 7-13 7ZM794 817l13 7-13 7Z" />
        <path d="M965 274h97v1.500h-97Z" />
        <rect x="910.5" y="241.5" width="36" height="15" stroke={GREEN} fill="#000" />
        <text x="918" y="253" fontSize="12">AHD</text>
      </g>
      <path d="M834 257h39v39h-39ZM834 644h39v39h-39Z" fill="#808080" />
      <rect x="831.5" y="296.5" width="34" height="9" fill="#fff" stroke="#fff" />
      <path d="M833 298v7h28Z" fill="#000" />
      <rect x="786.5" y="654.5" width="34" height="9" fill="#fff" stroke="#fff" />
      <path d="M820 655v8h-28Z" fill="#000" />

      {/* multi-split outdoor unit */}
      <g stroke={PURPLE}>
        <path d="M764.500 529.500h71v58h-71ZM764.500 558.500h71M767 545h4M767 572h4M827 545h5M826 571h6" />
        <path d="M764 538.500h-3.500v16h3.500M764 563.500h-3.500v15h3.500M836 538.500h3.500v16H836M836 563.500h3.500v15H836M762.500 538v16M762.500 563v15M837.500 538v16M837.500 563v15" strokeWidth="1.5" />
        <path d="M764.500 527.500h4v2M831.500 529.500v-2h4M764.500 588v2.500h4M835.500 588v2.500h-4" />
        <path d="M795 552v13M799 554l3 10M803 550l4-1M807 549v16M804 556h5M804 562h6" />
      </g>

      {/* coordinate axes */}
      <path d="M565 925v-22h-3.500l5.500-12 5.500 12H569v22Z" fill="#0f0" />
      <path d="M570 925h14v-4l13 6-13 6v-4h-14Z" fill="#f00" />
      <circle cx="567" cy="927" r="5.5" fill="#0000c0" />
      <text x="562" y="893" fill="#0f0" fontSize="15">Y</text>
      <text x="598" y="932" fill="#f00" fontSize="15">X</text>

      <rect x="596.5" y="505.5" width="94" height="98" rx="2" stroke="#ff2412" strokeWidth="3" />
      <rect x="749.5" y="498" width="107" height="101" rx="2" stroke="#ff2412" strokeWidth="3" />
    </svg>
  );
}

function Cube({ fill, children }) {
  return (
    <svg viewBox="0 0 20 20" className="size-5" fill="none" stroke={fill ? BLUE : "#4d5468"} strokeWidth="1.3" aria-hidden="true">
      <path d="M.8 6h13v13H2A1.200 1.200 0 0 1 .8 17.800Z" fill={fill ? PALE : "none"} />
      <path d="M.8 6 6 1h13l-5.200 5ZM19 1v13l-5.200 5V6" fill={fill ? PALE : "none"} />
      {children}
    </svg>
  );
}

function ViewTools() {
  return (
    <div className="absolute top-px right-0 flex h-[226px] w-8 flex-col items-center rounded bg-white text-[#4d5468]">
      <button aria-label="动态观察" className="mt-3">
        <svg viewBox="0 0 22 20" className="h-5 w-[22px]" fill="none" stroke="currentColor" strokeWidth="1.3">
          <circle cx="11" cy="10" r="8.5" />
          <path d="M17 2.500C20 1.500 22 3 20 7c-2 4-8 8-13 9.500C2 18 0 16 1.500 13c1-2 2-3 2-3" stroke={BLUE} />
        </svg>
      </button>
      <button aria-label="三维视图" className="mt-[9px]">
        <Cube>
          <path d="M3 10.500h2.500v5H3M3.500 13h2M8 10.500v5h1.200a2 2 0 0 0 2-2v-1a2 2 0 0 0-2-2Z" stroke={BLUE} />
        </Cube>
      </button>
      <button aria-label="俯视" className="mt-[9px]">
        <Cube>
          <path d="M1.500 6 6 1.500h12L13.500 6Z" fill={PALE} stroke={BLUE} />
        </Cube>
      </button>
      <span className="mt-2"><Caret className="text-[#4d5468]" /></span>
      <button aria-label="实体显示" className="mt-[7px]"><Cube fill /></button>
      <span className="mt-2"><Caret className="text-[#4d5468]" /></span>
      <button aria-label="旋转视图" className="mt-[5px]">
        <svg viewBox="0 0 20 22" className="h-[22px] w-5" fill="none" stroke="currentColor" strokeWidth="1.3">
          <path d="M7 4A8.500 8.500 0 1 0 15 5.500" />
          <path d="m8 0 5 3.500L8 7Z" fill={BLUE} stroke="none" />
        </svg>
      </button>
      <span className="mt-2"><Caret className="text-[#4d5468]" /></span>
      <hr className="mt-[5px] w-6 border-[#4d5468]" />
      <button aria-label="显示列表" className="mt-1.5">
        <svg viewBox="0 0 20 20" className="size-5" fill="none" stroke="currentColor" strokeWidth="1.3">
          <path d="M19 11V2a1.200 1.200 0 0 0-1.200-1.200H2A1.200 1.200 0 0 0 .8 2v16A1.200 1.200 0 0 0 2 19.200h7M4 6h2M8 6h8M4 10h2M8 10h4M4 14h3" />
          <ellipse cx="15" cy="16" rx="4" ry="2.8" stroke={BLUE} />
          <circle cx="15" cy="16" r="1" stroke={BLUE} />
        </svg>
      </button>
    </div>
  );
}

function Splitter({ right }) {
  return (
    <div className="flex w-1 shrink-0 items-start bg-white pt-[365px]">
      <button aria-label={right ? "收起右侧" : "收起左侧"} className="flex h-[100px] w-1 items-center bg-[#5c6470]">
        <svg viewBox="0 0 4 8" className="h-2 w-1" aria-hidden="true">
          <path d={right ? "M0 0v8l4-4Z" : "M4 0v8L0 4Z"} fill="#d0d0d0" />
        </svg>
      </button>
    </div>
  );
}

/* ---------- Display settings ---------- */

const SCOPES = ["当前分层", "相邻分层", "自定义分层", "全部分层"];
const TABS = ["楼层显示", "分层显示", "图元显示"];

function DisplayPanel() {
  const [scope, setScope] = useState("当前分层");
  return (
    <section className="flex w-[366px] shrink-0 flex-col border-x border-[#d5d5d5] bg-white">
      <PanelHead title="显示设置" />
      <div role="tablist" className="flex h-[27px] shrink-0 items-end gap-[3px] border-b border-[#c0c4cc] pl-0.5">
        {TABS.map((t) => (
          <button
            key={t}
            role="tab"
            className={
              t === "分层显示"
                ? "-mb-px h-6 rounded-t border border-b-0 border-[#c0c4cc] bg-white px-[5px] text-[#1f74e6]"
                : "h-[21px] rounded-t bg-[#dedede] px-1.5 text-[#444]"
            }
          >
            {t}
          </button>
        ))}
      </div>
      <div className="flex h-[30px] shrink-0 items-center border-x border-[#c0c4cc] pl-1.5 text-black">
        {SCOPES.map((s) => (
          <label key={s} className={`flex items-center gap-2 whitespace-nowrap ${s === "自定义分层" ? "mr-2" : "mr-5"}`}>
            <input
              type="radio"
              name="scope"
              checked={scope === s}
              onChange={() => setScope(s)}
              className="size-3.5 appearance-none rounded-full border border-[#808080] bg-white bg-[radial-gradient(circle,#1f74e6_3px,transparent_4px)] not-checked:bg-none"
            />
            {s}
          </label>
        ))}
      </div>
      <div className="flex-1 border-2 border-b-0 border-[#c0c4cc] pt-0.5 text-[#808080]">
        <div className="flex h-6 items-center pl-3">
          <Caret />
          <label className="flex items-center gap-[7px] pl-[9px]">
            <input
              type="checkbox"
              disabled
              className="size-3.5 appearance-none rounded-xs border border-[#a8a8a8] bg-[#f0f0f0] shadow-[inset_0_0_0_2px_#f0f0f0,inset_0_0_0_3px_#b8b8b8]"
            />
            全部分层
          </label>
        </div>
        <ul className="relative">
          {Array.from({ length: 20 }, (_, i) => (
            <li key={i} className="flex h-6 items-center pl-[51px]">
              <label className="flex items-center gap-[7px]">
                <span className="relative inline-flex">
                  <input
                    type="checkbox"
                    disabled
                    defaultChecked={i === 1}
                    className="peer size-3.5 appearance-none rounded-xs border border-[#a8a8a8] bg-[#f0f0f0]"
                  />
                  <svg viewBox="0 0 14 14" className="absolute inset-0 hidden size-3.5 peer-checked:block" fill="none" stroke="#a0a0a0" strokeWidth="2">
                    <path d="m3 7 3 3 5-6" />
                  </svg>
                </span>
                分层{i + 1}
              </label>
            </li>
          ))}
          <li aria-hidden="true" className="pointer-events-none absolute top-[18px] left-[21px] h-8 w-[108px] rounded-sm border-3 border-[#ff2412]" />
        </ul>
      </div>
    </section>
  );
}

/* ---------- Sheet manager ---------- */

const NUM = ["一", "二", "三", "四", "五", "六", "七", "八", "九"];
const floorOf = (i) => (i === 0 ? "首层" : `第${i + 1}层`);

const SHEETS = [
  { name: "设施-101~111_24-S1...", depth: 0 },
  { name: "模型", depth: 1, floor: "首层", layer: "分层1" },
  ...NUM.map((n, i) => ({ name: `${n}层空调通风平面图`, depth: 2, floor: floorOf(i), layer: "分层1" })),
  { name: "机房层通风平面图", depth: 2, floor: "机房层", layer: "分层1" },
  ...NUM.map((n, i) => ({ name: `${n}层采暖空调水平...`, depth: 2, floor: floorOf(i), layer: "分层2" })),
  { name: "机房层平面图", depth: 2, floor: "机房层", layer: "分层2" },
];

function Toggle() {
  return (
    <button aria-label="折叠" className="flex size-3 shrink-0 items-center justify-center rounded-xs border border-[#606060] bg-white">
      <span className="h-px w-1.5 bg-[#404040]" />
    </button>
  );
}

function SheetName({ sheet, last }) {
  if (sheet.depth === 0) {
    return <div className="flex h-5 items-center gap-[7px] pl-0.5"><Toggle />{sheet.name}</div>;
  }
  if (sheet.depth === 1) {
    return (
      <div className="flex h-5 items-center pl-2">
        <span className="h-2.5 w-1 self-start border-b border-l border-[#dcdcdc]" />
        <Toggle />
        <span className="pl-1.5">{sheet.name}</span>
      </div>
    );
  }
  return (
    <div className="flex h-5 items-center pl-[18px]">
      <span className={last ? "h-2.5 self-start border-l border-[#dcdcdc]" : "h-5 border-l border-[#dcdcdc]"} />
      <span className="mr-1.5 h-px w-4 bg-[#dcdcdc]" />
      {sheet.name}
    </div>
  );
}

const SHEET_TOOLS = [
  ["sheetAdd", "添加", false],
  ["sheetLocate", "定位", true],
  ["sheetSplit", "手动分割", true],
  ["sheetCopy", "复制", false],
  ["sheetDelete", "删除", false],
];

function SheetPanel() {
  return (
    <section className="flex w-[367px] shrink-0 flex-col border-l border-[#d5d5d5] bg-white">
      <PanelHead title="图纸管理" />
      <div className="flex h-[27px] shrink-0 items-center gap-1.5 rounded-l border-b border-[#dcdcdc] pt-0.5 pl-[5px]">
        {SHEET_TOOLS.map(([icon, label, caret], i) => (
          <button key={label} disabled={i > 0} className={`flex items-center gap-1 whitespace-nowrap ${i > 0 ? "text-[#a8a8a8]" : ""}`}>
            <span className={i > 0 ? "text-[#b8b8b8]" : "text-[#4d5468]"}><Icon name={icon} /></span>
            {label}
            {caret && <span className="pl-0.5"><Caret className="text-[#808080]" /></span>}
          </button>
        ))}
        <button aria-label="更多" className="ml-auto flex h-5 w-3 items-center justify-center rounded border border-[#e0e0e0]">
          <svg viewBox="0 0 8 6" className="h-1.5 w-2 shrink-0" aria-hidden="true"><path d="M0 0v6l3.500-3ZM4.500 0v6L8 3Z" fill="#333b50" /></svg>
        </button>
      </div>
      <div className="flex h-[26px] shrink-0 items-center border-b border-[#dcdcdc] pr-1.5">
        <input aria-label="搜索图纸" placeholder="搜索图纸..." className="min-w-0 flex-1 pl-0.5 outline-none placeholder:text-[#8a8a8a]" />
        <Icon name="search" className="size-3 text-[#808080]" />
      </div>
      <table className="mt-px w-[351px] table-fixed border-collapse border-t border-[#dcdcdc]">
        <colgroup>
          <col className="w-[22px]" />
          <col className="w-[156px]" />
          <col className="w-[51px]" />
          <col className="w-[71px]" />
          <col className="w-[51px]" />
        </colgroup>
        <thead>
          <tr className="h-[21px]">
            {["", "图纸名称", "比例", "楼层", "分层"].map((h) => (
              <th key={h} className="border-r border-b border-[#dcdcdc] font-normal">{h}</th>
            ))}
          </tr>
        </thead>
        <tbody>
          {SHEETS.map((s, i) => (
            <tr key={i} className="h-[21px]">
              <td className="border-r border-b border-[#dcdcdc] text-center">{i + 1}</td>
              <td className={`overflow-hidden border-r border-b border-[#dcdcdc] whitespace-nowrap ${i === 12 ? "bg-[#d4e9ff]" : ""}`}>
                <SheetName sheet={s} last={i === SHEETS.length - 1} />
              </td>
              <td className={`border-r border-b border-[#dcdcdc] text-center ${i === 12 ? "bg-[#d4e9ff]" : ""}`}>{s.layer && "1:1"}</td>
              <td className={`border-r border-b border-[#dcdcdc] text-center ${i === 12 ? "bg-[#d4e9ff]" : ""}`}>{s.floor}</td>
              <td className={`border-r border-b border-[#dcdcdc] pl-[3px] ${i === 12 ? "bg-[#d4e9ff]" : ""}`}>{s.layer}</td>
            </tr>
          ))}
        </tbody>
      </table>
    </section>
  );
}

export default function App() {
  return (
    <div className="flex h-screen flex-col overflow-hidden bg-white font-['Open_Sans','Noto_Sans_CJK_SC',sans-serif] text-xs text-[#262626]">
      <MenuBar />
      <Ribbon />
      <ComboBar />
      <main className="flex min-h-0 flex-1">
        <NavPanel />
        <div className="ml-1 flex w-[405px] shrink-0 flex-col">
          <ComponentPanel />
          <PropertyPanel />
        </div>
        <Splitter />
        <div className="relative min-w-0 flex-1">
          <Drawing />
          <ViewTools />
        </div>
        <Splitter right />
        <DisplayPanel />
        <div className="w-[5px] shrink-0" />
        <SheetPanel />
      </main>
    </div>
  );
}
